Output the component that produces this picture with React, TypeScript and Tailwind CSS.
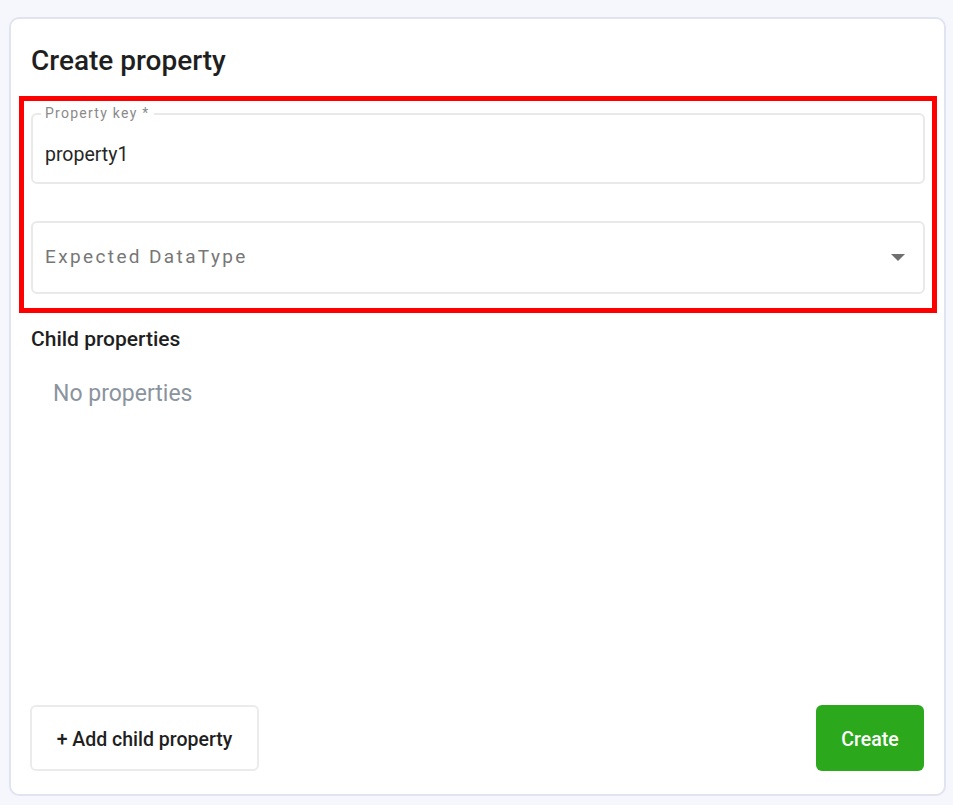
export default function App() {
  return (
    <div className="min-h-screen w-full bg-[#f6f7fc] pt-[17px] pl-[9px] pr-[7px] pb-[9px] font-['Roboto',sans-serif]">
      <div className="flex h-[779px] flex-col rounded-[10px] border-2 border-[#e1e4f0] bg-white">
        <h1 className="pl-[20px] pt-[26px] text-[28px] font-medium leading-[32px] text-[#1f1f1f]">
          Create property
        </h1>

        {/* highlighted fields */}
        <div className="mt-[19px] ml-[8px] mr-[7px] flex flex-col border-[5px] border-[#ff0000] px-[7px] pt-[12px] pb-[14px]">
          <div className="relative flex h-[71px] items-center rounded-[6px] border-2 border-[#e9e9e9] px-[12px] pt-[12px]">
            <span className="absolute -top-[10px] left-[8px] bg-white px-[4px] text-[14px] leading-[16px] tracking-[0.09em] text-[#8a8a8a]">
              Property key *
            </span>
            <span className="text-[19.5px] text-[#262626]">property1</span>
          </div>
          <div className="mt-[37px] flex h-[73px] items-center justify-between rounded-[6px] border-2 border-[#e9e9e9] pl-[12px] pr-[18px]">
            <span className="text-[19px] tracking-[0.125em] text-[#777777]">Expected DataType</span>
            <svg width="14" height="8" viewBox="0 0 14 8">
              <path d="M0 0 L14 0 L7 7 Z" fill="#6f6f6f" />
            </svg>
          </div>
        </div>

        <h2 className="mt-[13px] pl-[20px] text-[21px] font-medium leading-[26px] text-[#1f1f1f]">
          Child properties
        </h2>
        <p className="mt-[28px] pl-[42px] text-[23px] leading-[28px] text-[#8b949e]">No properties</p>

        <div className="mt-auto flex items-center justify-between pl-[19px] pr-[20px] pb-[23px]">
          <button className="h-[66px] w-[229px] rounded-[6px] border-2 border-[#ebebeb] bg-white pt-[3px] text-[19.5px] font-medium text-[#1f1f1f]">
            + Add child property
          </button>
          <button className="h-[66px] w-[108px] rounded-[6px] bg-[#2ca81c] pt-[3px] text-[19.5px] font-medium text-white">
            Create
          </button>
        </div>
      </div>
    </div>
  );
}
